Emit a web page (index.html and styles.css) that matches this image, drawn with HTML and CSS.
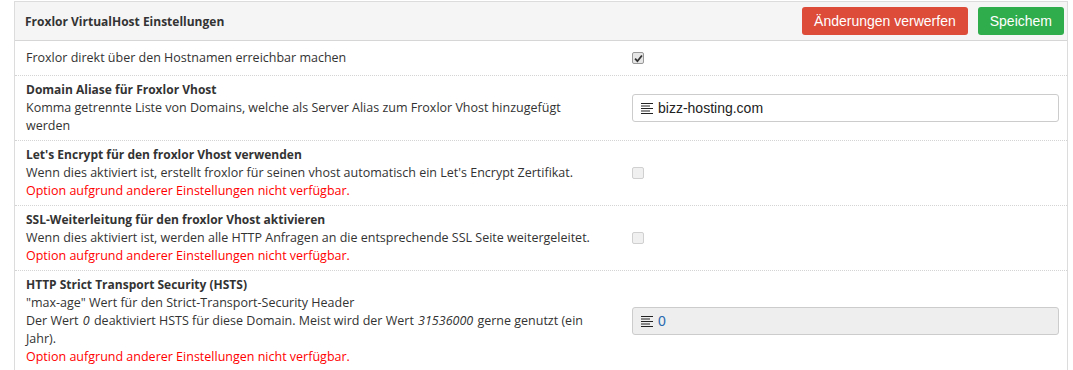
FILE: index.html
```html
<!DOCTYPE html>
<html lang="de">

<head>
    <meta charset="UTF-8">
    <title>Froxlor VirtualHost Einstellungen</title>
    <link rel="stylesheet" href="styles.css">
</head>

<body>
    <div class="panel">
        <div class="panel-heading">
            <h3>Froxlor VirtualHost Einstellungen</h3>
            <div class="actions">
                <button class="btn btn-danger">Änderungen verwerfen</button>
                <button class="btn btn-success">Speichem</button>
            </div>
        </div>

        <div class="row">
            <div class="label">
                <p>Froxlor direkt über den Hostnamen erreichbar machen</p>
            </div>
            <div class="field">
                <span class="check checked">
                    <svg viewBox="0 0 10 10" width="9" height="9"><path d="M1.2 5.2 L3.8 8 L8.8 1.6" fill="none" stroke="#333" stroke-width="2"/></svg>
                </span>
            </div>
        </div>

        <div class="row">
            <div class="label">
                <strong>Domain Aliase für Froxlor Vhost</strong>
                <p>Komma getrennte Liste von Domains, welche als Server Alias zum Froxlor Vhost hinzugefügt werden</p>
            </div>
            <div class="field">
                <div class="input">
                    <svg class="icon" viewBox="0 0 12 12" width="12" height="12"><path d="M0 1.5h12M0 4h9M0 6.5h12M0 9h9M0 11.5h12" stroke="#222" stroke-width="1.2"/></svg>
                    <span>bizz-hosting.com</span>
                </div>
            </div>
        </div>

        <div class="row">
            <div class="label">
                <strong>Let's Encrypt für den froxlor Vhost verwenden</strong>
                <p>Wenn dies aktiviert ist, erstellt froxlor für seinen vhost automatisch ein Let's Encrypt Zertifikat.</p>
                <p class="note">Option aufgrund anderer Einstellungen nicht verfügbar.</p>
            </div>
            <div class="field">
                <span class="check disabled"></span>
            </div>
        </div>

        <div class="row">
            <div class="label">
                <strong>SSL-Weiterleitung für den froxlor Vhost aktivieren</strong>
                <p>Wenn dies aktiviert ist, werden alle HTTP Anfragen an die entsprechende SSL Seite weitergeleitet.</p>
                <p class="note">Option aufgrund anderer Einstellungen nicht verfügbar.</p>
            </div>
            <div class="field">
                <span class="check disabled"></span>
            </div>
        </div>

        <div class="row">
            <div class="label">
                <strong>HTTP Strict Transport Security (HSTS)</strong>
                <p>"max-age" Wert für den Strict-Transport-Security Header</p>
                <p>Der Wert <em>0</em> deaktiviert HSTS für diese Domain. Meist wird der Wert <em>31536000</em> gerne genutzt (ein Jahr).</p>
                <p class="note">Option aufgrund anderer Einstellungen nicht verfügbar.</p>
            </div>
            <div class="field">
                <div class="input readonly">
                    <svg class="icon" viewBox="0 0 12 12" width="12" height="12"><path d="M0 1.5h12M0 4h9M0 6.5h12M0 9h9M0 11.5h12" stroke="#222" stroke-width="1.2"/></svg>
                    <span class="value">0</span>
                </div>
            </div>
        </div>
    </div>
</body>

</html>
```

FILE: styles.css
```css
body {
    font-family: 'Open Sans', 'DejaVu Sans', sans-serif;
    font-size: 12.5px;
    color: #333;
    background-color: #fff;
    margin: 0;
    padding: 1px 5px 0 14px;
}

.panel {
    border: 1px solid #dcdcdc;
    border-bottom: none;
}

.panel-heading {
    display: flex;
    justify-content: space-between;
    align-items: center;
    height: 38px;
    padding: 0 3px 0 10px;
    background-color: #f5f5f5;
    border-bottom: 1px solid #d6d6d6;
}

.panel-heading h3 {
    margin: 0;
    font-size: 12px;
    font-weight: bold;
    color: #333;
}

.actions {
    display: flex;
    gap: 10px;
}

.btn {
    font-family: 'Liberation Sans', Arial, sans-serif;
    font-size: 14px;
    color: #fff;
    border: none;
    border-radius: 3px;
    height: 28px;
    padding: 0 12px;
    cursor: pointer;
}

.btn-danger {
    background-color: #dd4b39;
}

.btn-success {
    background-color: #2fac4b;
}

.row {
    display: grid;
    grid-template-columns: 570px 1fr;
    column-gap: 36px;
    align-items: center;
    padding: 5px 8px 5px 11px;
    border-bottom: 1px dotted #d4d4d4;
    line-height: 18px;
}

.row:last-child {
    border-bottom: none;
}

.label strong {
    display: block;
    font-size: 12px;
    font-weight: bold;
}

.label p {
    margin: 0;
}

.label em {
    display: inline-block;
    padding: 0 1px;
}

.label .note {
    color: #f00;
}

.field {
    display: flex;
    align-items: center;
    min-height: 24px;
}

.check {
    display: inline-flex;
    align-items: center;
    justify-content: center;
    width: 10px;
    height: 10px;
    border: 1px solid #999;
    border-radius: 2px;
    background-color: #e6e6e6;
}

.check.disabled {
    border-color: #d0d0d0;
    background-color: #f0f0f0;
}

.input {
    flex: 1;
    display: flex;
    align-items: center;
    gap: 5px;
    height: 26px;
    padding: 0 8px;
    border: 1px solid #ccc;
    border-radius: 3px;
    font-family: 'Liberation Sans', Arial, sans-serif;
    font-size: 14px;
    color: #222;
}

.input.readonly {
    background-color: #eee;
}

.input .value {
    color: #2a6ab0;
}
```
